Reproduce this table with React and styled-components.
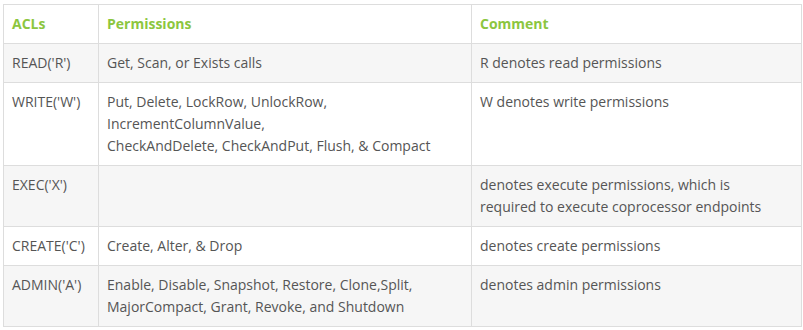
import React from "react";
import styled, { createGlobalStyle } from "styled-components";

const Global = createGlobalStyle`
  html, body { margin: 0; padding: 0; background: #ffffff; }
  body { font-family: "Open Sans", "Noto Sans", sans-serif; }
`;

const Wrapper = styled.div`
  padding: 4px 3px 0 3px;
`;

const Table = styled.table`
  width: 798px;
  border-collapse: collapse;
  table-layout: fixed;
  font-size: 14px;
  color: #555555;
`;

const HeadCell = styled.th`
  border: 1px solid #dddddd;
  padding: 8px 8px;
  line-height: 22px;
  text-align: left;
  vertical-align: top;
  font-weight: 700;
  color: #8cc63f;
`;

const Row = styled.tr`
  background: ${(p) => (p.$striped ? "#f6f6f6" : "#ffffff")};
`;

const Cell = styled.td`
  border: 1px solid #dddddd;
  padding: 8px 8px;
  line-height: 22px;
  vertical-align: top;
  white-space: nowrap;
`;

const rows = [
  ["READ('R')", ["Get, Scan, or Exists calls"], ["R denotes read permissions"]],
  [
    "WRITE('W')",
    [
      "Put, Delete, LockRow, UnlockRow,",
      "IncrementColumnValue,",
      "CheckAndDelete, CheckAndPut, Flush, & Compact",
    ],
    ["W denotes write permissions"],
  ],
  [
    "EXEC('X')",
    [],
    ["denotes execute permissions, which is", "required to execute coprocessor endpoints"],
  ],
  ["CREATE('C')", ["Create, Alter, & Drop"], ["denotes create permissions"]],
  [
    "ADMIN('A')",
    ["Enable, Disable, Snapshot, Restore, Clone,Split,", "MajorCompact, Grant, Revoke, and Shutdown"],
    ["denotes admin permissions"],
  ],
];

const Lines = ({ lines }) =>
  lines.map((l, i) => (
    <React.Fragment key={i}>
      {i > 0 && <br />}
      {l}
    </React.Fragment>
  ));

export default function App() {
  return (
    <>
      <Global />
      <Wrapper>
        <Table>
          <colgroup>
            <col style={{ width: 95 }} />
            <col style={{ width: 373 }} />
            <col style={{ width: 330 }} />
          </colgroup>
          <thead>
            <tr>
              <HeadCell>ACLs</HeadCell>
              <HeadCell>Permissions</HeadCell>
              <HeadCell>Comment</HeadCell>
            </tr>
          </thead>
          <tbody>
            {rows.map((r, i) => (
              <Row key={r[0]} $striped={i % 2 === 0}>
                <Cell>{r[0]}</Cell>
                <Cell>
                  <Lines lines={r[1]} />
                </Cell>
                <Cell>
                  <Lines lines={r[2]} />
                </Cell>
              </Row>
            ))}
          </tbody>
        </Table>
      </Wrapper>
    </>
  );
}
